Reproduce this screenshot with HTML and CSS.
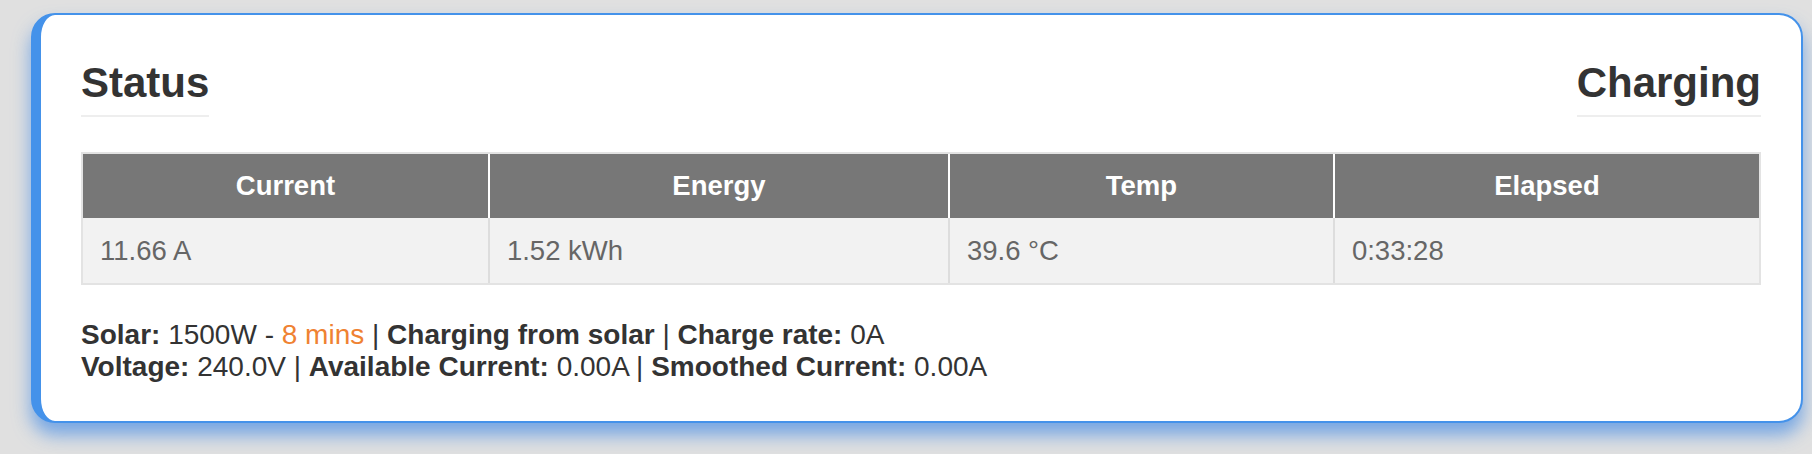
FILE: index.html
```html
<!DOCTYPE html>
<html lang="en">
<head>
<meta charset="utf-8">
<title>Status</title>
<link rel="stylesheet" href="styles.css">
</head>
<body>
<div class="page">
  <section class="card">
    <header class="card-head">
      <h2 class="title">Status</h2>
      <h2 class="title">Charging</h2>
    </header>
    <table class="stats">
      <colgroup>
        <col class="col-current">
        <col class="col-energy">
        <col class="col-temp">
        <col class="col-elapsed">
      </colgroup>
      <thead>
        <tr><th>Current</th><th>Energy</th><th>Temp</th><th>Elapsed</th></tr>
      </thead>
      <tbody>
        <tr><td>11.66 A</td><td>1.52 kWh</td><td>39.6 °C</td><td>0:33:28</td></tr>
      </tbody>
    </table>
    <p class="info">
      <b>Solar:</b> 1500W - <span class="eta">8 mins</span> | <b>Charging from solar</b> | <b>Charge rate:</b> 0A<br>
      <b>Voltage:</b> 240.0V | <b>Available Current:</b> 0.00A | <b>Smoothed Current:</b> 0.00A
    </p>
  </section>
</div>
</body>
</html>
```

FILE: styles.css
```css
html, body {
  margin: 0;
  background: #e0e0e0;
}

body {
  font-family: "Liberation Sans", Arial, Helvetica, sans-serif;
  color: #333;
}

.page {
  padding: 13px 9px 31px 31px;
}

.card {
  background: #fff;
  border: 2px solid #4492ea;
  border-left-width: 10px;
  border-radius: 24px;
  padding: 45px 40px 38px 40px;
  box-shadow: 0 12px 18px rgba(60, 135, 230, 0.65);
}

.card-head {
  display: flex;
  justify-content: space-between;
  align-items: flex-end;
}

.title {
  margin: 0;
  font-size: 42px;
  line-height: 46px;
  font-weight: bold;
  color: #333;
  padding-bottom: 9px;
  border-bottom: 2px solid #eeeeee;
}

.stats {
  width: 100%;
  margin-top: 35px;
  table-layout: fixed;
  border-collapse: separate;
  border-spacing: 0;
  border: 2px solid #e3e3e3;
  font-size: 27.5px;
}

.col-current { width: 24.16%; }
.col-energy { width: 27.45%; }
.col-temp { width: 22.97%; }
.col-elapsed { width: 25.42%; }

.stats th,
.stats td {
  box-sizing: border-box;
  line-height: 32px;
}

.stats th {
  background: #777777;
  color: #fff;
  font-weight: bold;
  text-align: center;
  padding: 16px 16px;
}

.stats th + th {
  border-left: 2px solid #fff;
}

.stats td {
  background: #f2f2f2;
  color: #666;
  text-align: left;
  padding: 17px 17px 16px 17px;
}

.stats td + td {
  border-left: 2px solid #dddddd;
}

.info {
  margin: 34px 0 0 0;
  font-size: 28px;
  line-height: 32px;
  color: #333;
}

.info b {
  font-weight: bold;
}

.eta {
  color: #ef8232;
}
```
